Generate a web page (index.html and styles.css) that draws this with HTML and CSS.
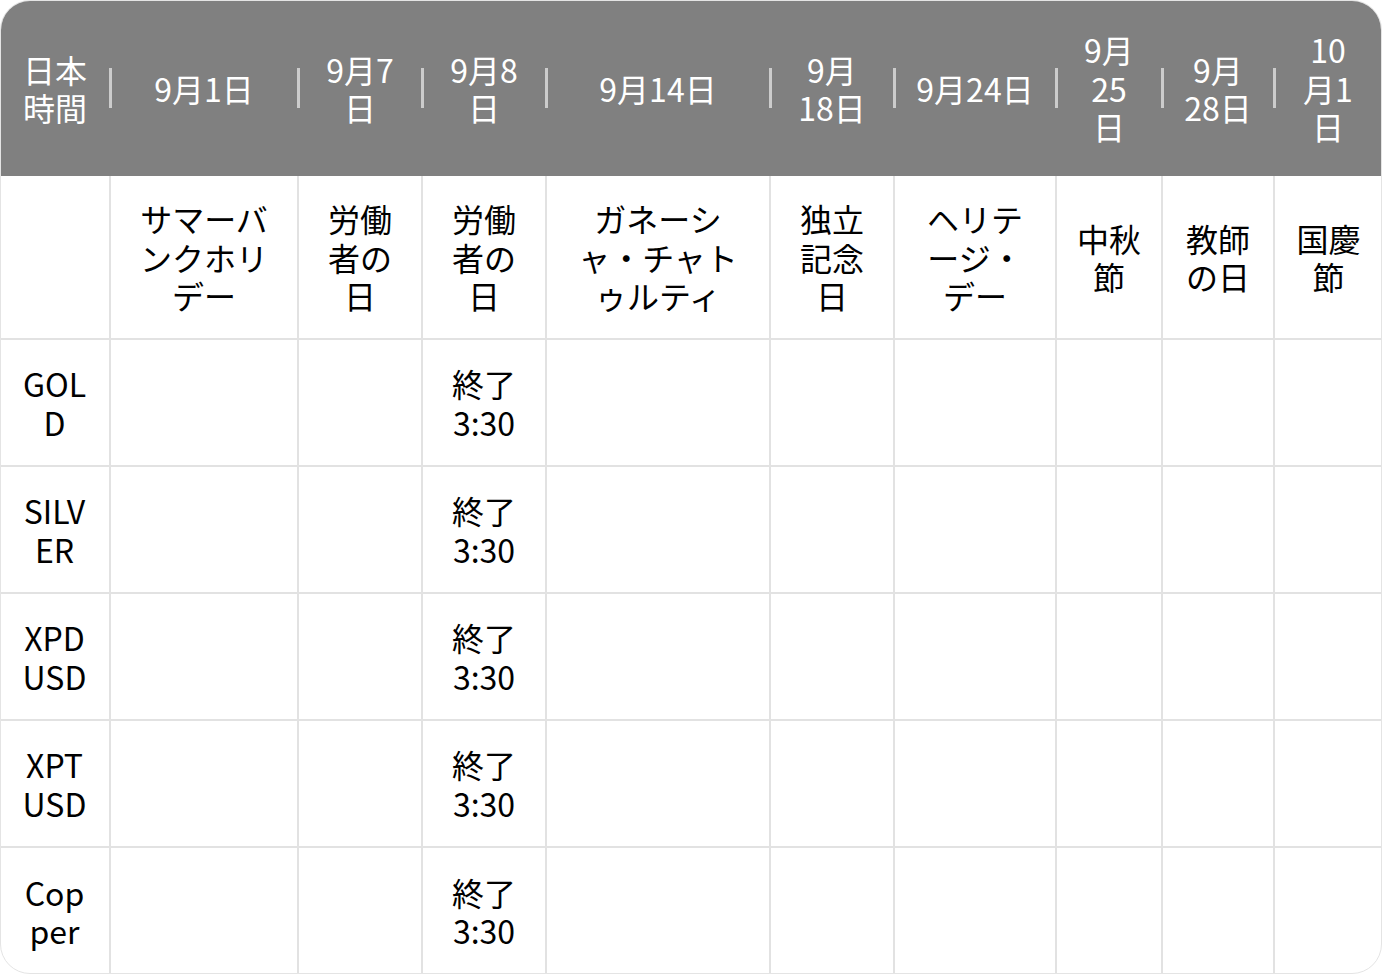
FILE: index.html
```html
<!DOCTYPE html>
<html lang="ja">
<head>
<meta charset="utf-8">
<link rel="stylesheet" href="styles.css">
</head>
<body>
<div class="card">
<table class="sched">
<colgroup>
<col style="width:110px"><col style="width:188px"><col style="width:124px"><col style="width:124px"><col style="width:224px"><col style="width:124px"><col style="width:162px"><col style="width:106px"><col style="width:112px"><col style="width:108px">
</colgroup>
<thead>
<tr class="head">
<th>日本時間</th><th class="sep">9月1日</th><th class="sep">9月7日</th><th class="sep">9月8日</th><th class="sep">9月14日</th><th class="sep">9月18日</th><th class="sep">9月24日</th><th class="sep">9月25日</th><th class="sep">9月28日</th><th class="sep">10月1日</th>
</tr>
</thead>
<tbody>
<tr class="hol">
<td></td><td>サマーバンクホリデー</td><td>労働者の日</td><td>労働者の日</td><td>ガネーシャ・チャトゥルティ</td><td>独立記念日</td><td>ヘリテージ・デー</td><td>中秋節</td><td>教師の日</td><td>国慶節</td>
</tr>
<tr class="row"><td>GOLD</td><td></td><td></td><td>終了 3:30</td><td></td><td></td><td></td><td></td><td></td><td></td></tr>
<tr class="row"><td>SILVER</td><td></td><td></td><td>終了 3:30</td><td></td><td></td><td></td><td></td><td></td><td></td></tr>
<tr class="row"><td>XPD USD</td><td></td><td></td><td>終了 3:30</td><td></td><td></td><td></td><td></td><td></td><td></td></tr>
<tr class="row"><td>XPT USD</td><td></td><td></td><td>終了 3:30</td><td></td><td></td><td></td><td></td><td></td><td></td></tr>
<tr class="row last"><td>Copper</td><td></td><td></td><td>終了 3:30</td><td></td><td></td><td></td><td></td><td></td><td></td></tr>
</tbody>
</table>
</div>
</body>
</html>
```

FILE: styles.css
```css
html, body {
  margin: 0;
  padding: 0;
  background: #ffffff;
}
body {
  width: 1382px;
  height: 974px;
  overflow: hidden;
  font-family: "Noto Sans CJK JP", "Noto Sans", sans-serif;
}
.card {
  width: 1382px;
  height: 974px;
  box-sizing: border-box;
  border-radius: 30px;
  overflow: hidden;
  border: 1px solid #e4e4e4;
  background: #fff;
}
.sched {
  width: 1382px;
  table-layout: fixed;
  border-collapse: collapse;
  margin: -1px 0 0 -1px;
}
.sched th,
.sched td {
  text-align: center;
  vertical-align: middle;
  font-size: 32px;
  line-height: 38.4px;
  word-break: normal;
  overflow-wrap: anywhere;
  line-break: normal;
}
.head th {
  height: 176px;
  padding: 0 21.3px;
  background: #808080;
  color: #ffffff;
  font-weight: 400;
  position: relative;
}
.head th.sep::before {
  content: "";
  position: absolute;
  left: -1px;
  top: 68px;
  width: 3px;
  height: 40px;
  background: #cccccc;
}
.sched td {
  padding: 0 18px;
  color: #000000;
  font-weight: 400;
  border: 2px solid #e2e2e2;
}
.sched tr td:first-child { border-left: none; }
.sched tr td:last-child { border-right: none; }
.hol td {
  border-top: none;
  height: 163px;
  box-sizing: border-box;
}
.row td {
  height: 127px;
  box-sizing: border-box;
}
.row.last td {
  border-bottom: none;
}
```
